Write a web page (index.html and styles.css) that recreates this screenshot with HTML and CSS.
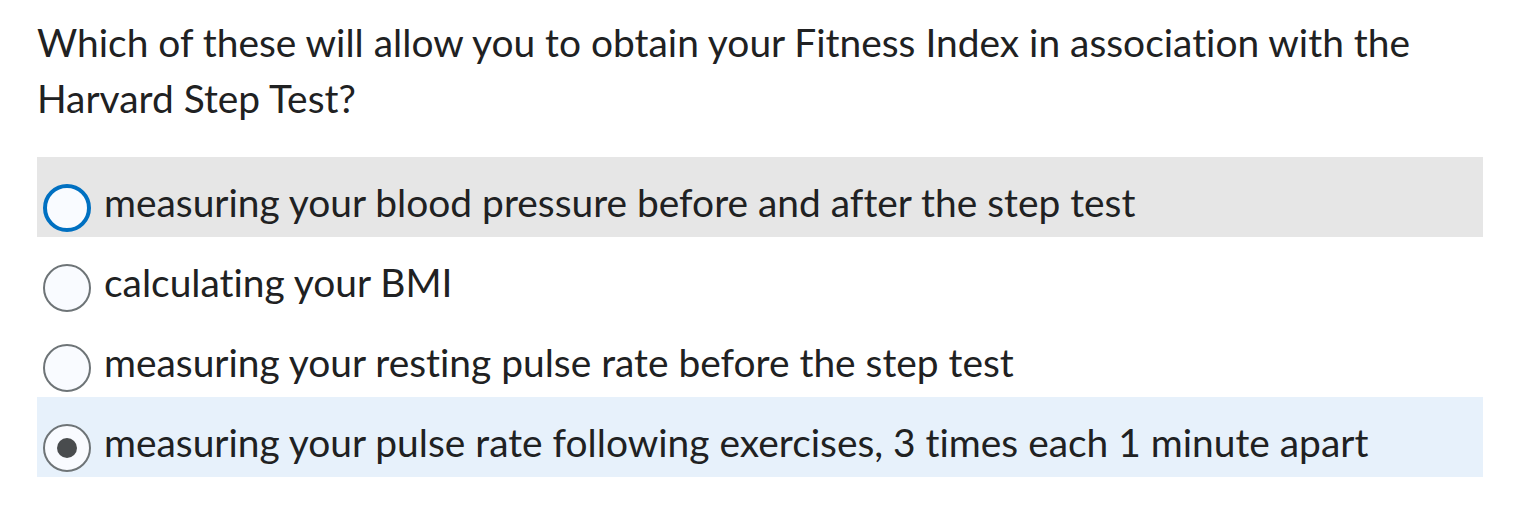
FILE: index.html
```html
<!DOCTYPE html>
<html lang="en">
<head>
    <meta charset="UTF-8">
    <meta name="viewport" content="width=device-width, initial-scale=1.0">
    <title>Question</title>
    <link rel="stylesheet" href="styles.css">
</head>
<body>

<div class="question">
    <p class="question-text">Which of these will allow you to obtain your Fitness Index in association with the Harvard Step Test?</p>

    <!-- Answer choices -->
    <div class="choices">
        <label class="choice hover">
            <span class="radio focused"></span>
            <span class="choice-text">measuring your blood pressure before and after the step test</span>
        </label>
        <label class="choice">
            <span class="radio"></span>
            <span class="choice-text">calculating your BMI</span>
        </label>
        <label class="choice">
            <span class="radio"></span>
            <span class="choice-text">measuring your resting pulse rate before the step test</span>
        </label>
        <label class="choice selected">
            <span class="radio checked"></span>
            <span class="choice-text">measuring your pulse rate following exercises, 3 times each 1 minute apart</span>
        </label>
    </div>
</div>

</body>
</html>
```

FILE: styles.css
```css
body {
    margin: 0;
    font-family: Lato, "Noto Sans", sans-serif;
    font-variant-ligatures: none;
    color: #202122;
    background: #fff;
}

.question {
    padding: 0 45px 0 37px;
}

.question-text {
    margin: 0;
    padding-top: 14px;
    font-size: 38.9px;
    line-height: 56px;
    width: 1446px;
}

.choices {
    margin-top: 31px;
}

.choice {
    display: flex;
    align-items: flex-start;
    height: 80px;
    padding: 27px 0 0 6px;
    box-sizing: border-box;
    cursor: pointer;
}

.choice.hover {
    background: #e6e6e6;
}

.choice.selected {
    background: #e7f1fb;
}

.radio {
    flex: none;
    position: relative;
    width: 48px;
    height: 48px;
    border: 2px solid #6e7477;
    border-radius: 50%;
    background: #f9fbff;
    box-sizing: border-box;
}

.radio.focused {
    border: 4px solid #0070c1;
}

.radio.checked::after {
    content: "";
    position: absolute;
    top: 12px;
    left: 12px;
    width: 20px;
    height: 20px;
    border-radius: 50%;
    background: #494c4e;
}

.choice-text {
    margin-left: 13px;
    margin-top: -9px;
    font-size: 38.9px;
    line-height: 54px;
}
```
